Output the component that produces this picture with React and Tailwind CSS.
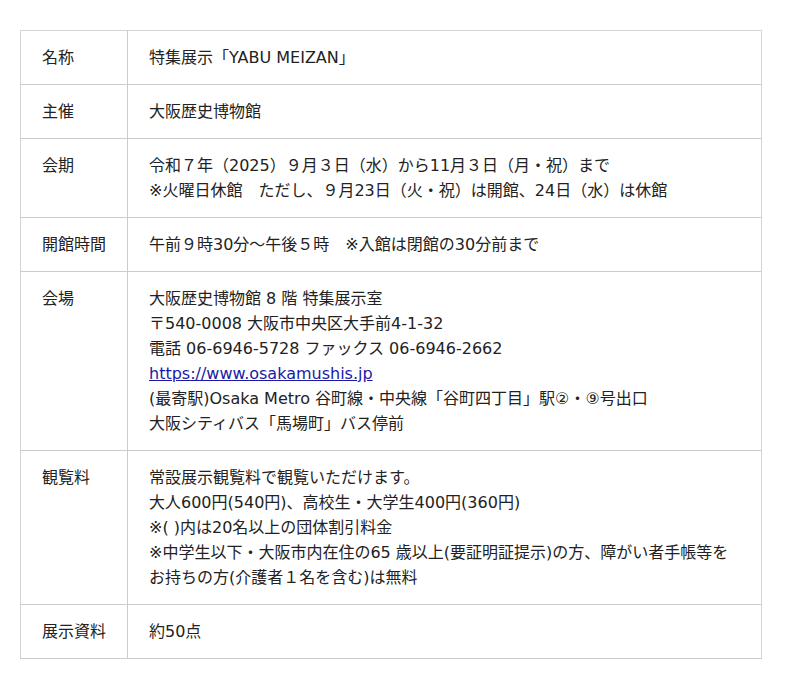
export default function App() {
  const rows = [
    { k: "名称", v: ["特集展示「YABU MEIZAN」"] },
    { k: "主催", v: ["大阪歴史博物館"] },
    {
      k: "会期",
      v: [
        "令和７年（2025）９月３日（水）から11月３日（月・祝）まで",
        "※火曜日休館　ただし、９月23日（火・祝）は開館、24日（水）は休館",
      ],
    },
    { k: "開館時間", v: ["午前９時30分～午後５時　※入館は閉館の30分前まで"] },
    {
      k: "会場",
      v: [
        "大阪歴史博物館 8 階 特集展示室",
        "〒540-0008 大阪市中央区大手前4-1-32",
        "電話 06-6946-5728 ファックス 06-6946-2662",
        "LINK",
        "(最寄駅)Osaka Metro 谷町線・中央線「谷町四丁目」駅②・⑨号出口",
        "大阪シティバス「馬場町」バス停前",
      ],
    },
    {
      k: "観覧料",
      v: [
        "常設展示観覧料で観覧いただけます。",
        "大人600円(540円)、高校生・大学生400円(360円)",
        "※( )内は20名以上の団体割引料金",
        "※中学生以下・大阪市内在住の65 歳以上(要証明証提示)の方、障がい者手帳等を",
        "お持ちの方(介護者１名を含む)は無料",
      ],
    },
    { k: "展示資料", v: ["約50点"] },
  ];
  return (
    <div
      className="min-h-[689px] bg-white pt-[30px] pl-[20px] text-[#222]"
      style={{ fontFamily: '"DejaVu Sans", "Noto Sans CJK JP", sans-serif' }}
    >
      <table className="w-[742px] border-collapse border border-[#d4d4d4] text-[16px] leading-[25px]">
        <tbody>
          {rows.map((r) => (
            <tr key={r.k} className="border-b border-[#cccccc]">
              <td className="w-[107px] border-r border-[#cccccc] pl-[21px] pr-2 py-[14px] align-top whitespace-nowrap">
                {r.k}
              </td>
              <td className="pl-[21px] pr-2 py-[14px] align-top">
                {r.v.map((line, i) =>
                  line === "LINK" ? (
                    <div key={i}>
                      <a href="#" className="text-[#1a1aa6] underline">
                        https://www.osakamushis.jp
                      </a>
                    </div>
                  ) : (
                    <div key={i} className="whitespace-nowrap">
                      {line}
                    </div>
                  )
                )}
              </td>
            </tr>
          ))}
        </tbody>
      </table>
    </div>
  );
}
